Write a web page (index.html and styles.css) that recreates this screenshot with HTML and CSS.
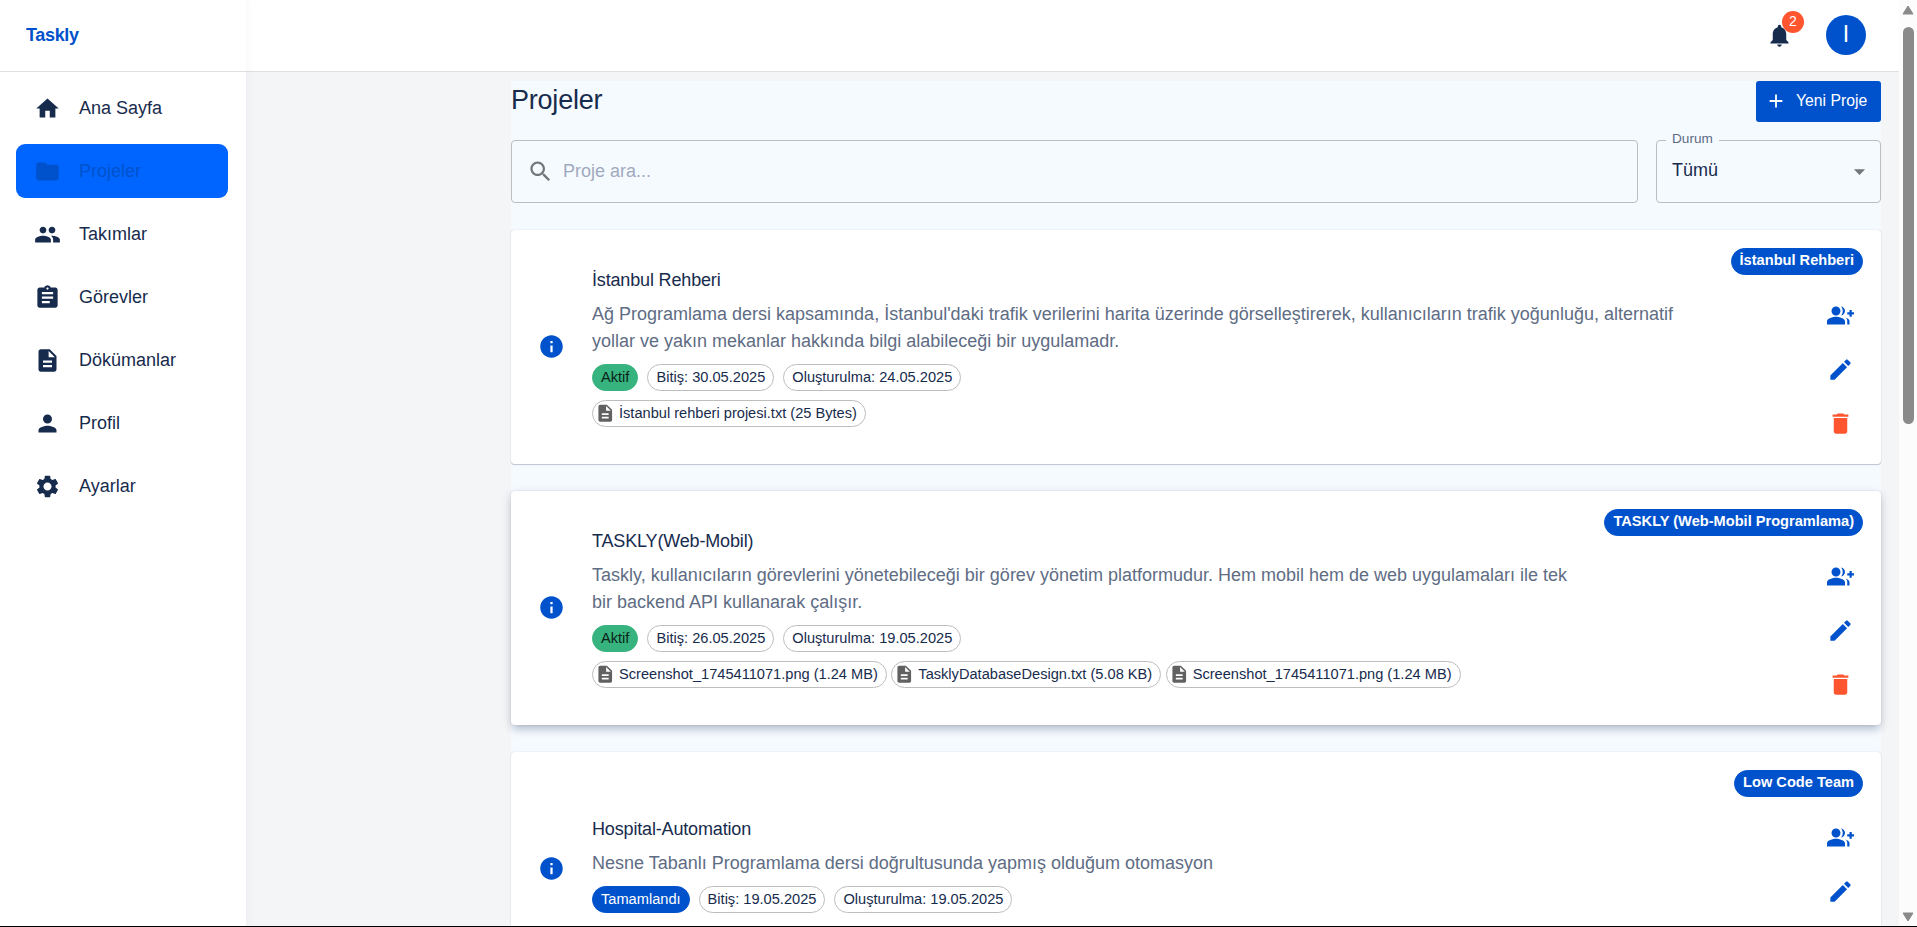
FILE: index.html
```
<!DOCTYPE html>
<html lang="tr">
<head>
<meta charset="utf-8">
<title>Taskly</title>
<link rel="stylesheet" href="styles.css">
</head>
<body>
<svg class="defs" aria-hidden="true">
  <symbol id="doc" viewBox="0 0 24 24"><path d="M14 2H6c-1.1 0-1.99.9-1.99 2L4 20c0 1.1.89 2 1.99 2H18c1.1 0 2-.9 2-2V8zm2 16H8v-2h8zm0-4H8v-2h8zm-3-5V3.5L18.5 9z"/></symbol>
  <symbol id="info" viewBox="0 0 24 24"><path d="M12 2C6.48 2 2 6.48 2 12s4.48 10 10 10 10-4.48 10-10S17.52 2 12 2m1 15h-2v-6h2zm0-8h-2V7h2z"/></symbol>
  <symbol id="group-add" viewBox="0 0 24 24"><path d="M22 9V7h-2v2h-2v2h2v2h2v-2h2V9zM8 12c2.21 0 4-1.79 4-4s-1.79-4-4-4-4 1.79-4 4 1.79 4 4 4m0 1c-2.67 0-8 1.34-8 4v3h16v-3c0-2.66-5.33-4-8-4m4.51-8.95C13.43 5.11 14 6.49 14 8s-.57 2.89-1.49 3.95C14.47 11.7 16 10.04 16 8s-1.53-3.7-3.49-3.95m4.02 9.78C17.42 14.66 18 15.7 18 17v3h2v-3c0-1.45-1.59-2.51-3.47-3.17"/></symbol>
  <symbol id="edit" viewBox="0 0 24 24"><path d="M3 17.25V21h3.75L17.81 9.94l-3.75-3.75zM20.71 7.04c.39-.39.39-1.02 0-1.41l-2.34-2.34a.996.996 0 0 0-1.41 0l-1.83 1.83 3.75 3.75z"/></symbol>
  <symbol id="trash" viewBox="0 0 24 24"><path d="M6 19c0 1.1.9 2 2 2h8c1.1 0 2-.9 2-2V7H6zM19 4h-3.5l-1-1h-5l-1 1H5v2h14z"/></symbol>
</svg>
<div class="app">
  <aside class="sidebar">
    <div class="brand">Taskly</div>
    <nav class="nav">
      <a class="nav-item"><svg class="icon" viewBox="0 0 24 24"><path d="M10 20v-6h4v6h5v-8h3L12 3 2 12h3v8z"/></svg><span>Ana Sayfa</span></a>
      <a class="nav-item active"><svg class="icon" viewBox="0 0 24 24"><path d="M10 4H4c-1.1 0-1.99.9-1.99 2L2 18c0 1.1.9 2 2 2h16c1.1 0 2-.9 2-2V8c0-1.100-.9-2-2-2h-8z"/></svg><span>Projeler</span></a>
      <a class="nav-item"><svg class="icon" viewBox="0 0 24 24"><path d="M16 11c1.660 0 2.990-1.340 2.990-3S17.660 5 16 5s-3 1.340-3 3 1.340 3 3 3m-8 0c1.660 0 2.990-1.340 2.990-3S9.660 5 8 5 5 6.340 5 8s1.340 3 3 3m0 2c-2.330 0-7 1.170-7 3.500V19h14v-2.500c0-2.330-4.670-3.500-7-3.500m8 0c-.29 0-.62.020-.97.050 1.160.84 1.970 1.970 1.970 3.450V19h6v-2.500c0-2.330-4.670-3.500-7-3.500"/></svg><span>Takımlar</span></a>
      <a class="nav-item"><svg class="icon" viewBox="0 0 24 24"><path d="M19 3h-4.180C14.400 1.840 13.300 1 12 1s-2.400.84-2.820 2H5c-1.100 0-2 .9-2 2v14c0 1.100.9 2 2 2h14c1.100 0 2-.9 2-2V5c0-1.100-.9-2-2-2m-7 0c.55 0 1 .45 1 1s-.45 1-1 1-1-.45-1-1 .45-1 1-1m2 14H7v-2h7zm3-4H7v-2h10zm0-4H7V7h10z"/></svg><span>Görevler</span></a>
      <a class="nav-item"><svg class="icon"><use href="#doc"/></svg><span>Dökümanlar</span></a>
      <a class="nav-item"><svg class="icon" viewBox="0 0 24 24"><path d="M12 12c2.210 0 4-1.790 4-4s-1.790-4-4-4-4 1.790-4 4 1.790 4 4 4m0 2c-2.670 0-8 1.340-8 4v2h16v-2c0-2.660-5.330-4-8-4"/></svg><span>Profil</span></a>
      <a class="nav-item"><svg class="icon" viewBox="0 0 24 24"><path d="M19.140 12.940c.04-.3.06-.61.06-.94 0-.32-.02-.64-.07-.94l2.030-1.580c.18-.14.23-.41.12-.61l-1.920-3.320c-.12-.22-.37-.29-.59-.22l-2.390.96c-.5-.38-1.030-.7-1.620-.94l-.36-2.540c-.04-.24-.24-.41-.48-.41h-3.840c-.24 0-.43.17-.47.41l-.36 2.540c-.59.24-1.130.57-1.620.94l-2.390-.96c-.22-.08-.47 0-.59.22L2.740 8.870c-.12.21-.08.47.12.61l2.030 1.580c-.05.3-.09.63-.09.94s.02.64.07.94l-2.030 1.580c-.18.14-.23.41-.12.61l1.920 3.320c.12.22.37.29.59.22l2.390-.96c.5.38 1.030.7 1.620.94l.36 2.540c.05.24.24.41.48.41h3.840c.24 0 .44-.17.47-.41l.36-2.540c.59-.24 1.130-.56 1.620-.94l2.390.96c.22.08.47 0 .59-.22l1.920-3.320c.12-.22.07-.47-.12-.61zM12 15.600c-1.980 0-3.600-1.620-3.600-3.600s1.620-3.600 3.600-3.600 3.600 1.620 3.600 3.600-1.620 3.600-3.600 3.600"/></svg><span>Ayarlar</span></a>
    </nav>
  </aside>
  <div class="page">
    <header class="topbar">
      <div class="bell"><svg class="icon" viewBox="0 0 24 24"><path d="M12 22c1.100 0 2-.9 2-2h-4c0 1.100.89 2 2 2m6-6v-5c0-3.070-1.640-5.640-4.500-6.320V4c0-.83-.67-1.500-1.500-1.500s-1.500.67-1.500 1.500v.68C7.630 5.360 6 7.920 6 11v5l-2 2v1h16v-1z"/></svg><span class="badge">2</span></div>
      <div class="avatar">I</div>
    </header>
    <main class="content">
      <div class="head">
        <h1 class="title">Projeler</h1>
        <button class="new"><svg class="plus" viewBox="0 0 24 24"><path d="M19 13h-6v6h-2v-6H5v-2h6V5h2v6h6z"/></svg><span>Yeni Proje</span></button>
      </div>
      <div class="filters">
        <div class="search"><svg class="icon" viewBox="0 0 24 24"><path d="M15.500 14h-.79l-.28-.27C15.410 12.590 16 11.110 16 9.500 16 5.910 13.090 3 9.500 3S3 5.910 3 9.500 5.910 16 9.500 16c1.610 0 3.090-.59 4.230-1.570l.27.28v.79l5 4.990L20.490 19zm-6 0C7.010 14 5 11.990 5 9.500S7.010 5 9.500 5 14 7.010 14 9.500 11.990 14 9.500 14"/></svg><span>Proje ara...</span></div>
        <div class="select"><span class="label">Durum</span><span class="value">Tümü</span><svg class="icon" viewBox="0 0 24 24"><path d="m7 10 5 5 5-5z"/></svg></div>
      </div>
      <section class="cards">
        <article class="card">
          <svg class="icon info"><use href="#info"/></svg>
          <div class="body">
            <h2 class="name">İstanbul Rehberi</h2>
            <p class="desc">Ağ Programlama dersi kapsamında, İstanbul'daki trafik verilerini harita üzerinde görselleştirerek, kullanıcıların trafik yoğunluğu, alternatif yollar ve yakın mekanlar hakkında bilgi alabileceği bir uygulamadr.</p>
            <div class="chips"><span class="chip green">Aktif</span><span class="chip">Bitiş: 30.05.2025</span><span class="chip">Oluşturulma: 24.05.2025</span></div>
            <div class="files"><span class="chip file"><svg><use href="#doc"/></svg>İstanbul rehberi projesi.txt (25 Bytes)</span></div>
          </div>
          <div class="side">
            <span class="chip team">İstanbul Rehberi</span>
            <div class="actions"><span class="act"><svg class="icon"><use href="#group-add"/></svg></span><span class="act"><svg class="icon"><use href="#edit"/></svg></span><span class="act red"><svg class="icon"><use href="#trash"/></svg></span></div>
          </div>
        </article>
        <article class="card raised">
          <svg class="icon info"><use href="#info"/></svg>
          <div class="body">
            <h2 class="name">TASKLY(Web-Mobil)</h2>
            <p class="desc">Taskly, kullanıcıların görevlerini yönetebileceği bir görev yönetim platformudur. Hem mobil hem de web uygulamaları ile tek bir backend API kullanarak çalışır.</p>
            <div class="chips"><span class="chip green">Aktif</span><span class="chip">Bitiş: 26.05.2025</span><span class="chip">Oluşturulma: 19.05.2025</span></div>
            <div class="files"><span class="chip file"><svg><use href="#doc"/></svg>Screenshot_1745411071.png (1.24 MB)</span><span class="chip file"><svg><use href="#doc"/></svg>TasklyDatabaseDesign.txt (5.08 KB)</span><span class="chip file"><svg><use href="#doc"/></svg>Screenshot_1745411071.png (1.24 MB)</span></div>
          </div>
          <div class="side">
            <span class="chip team">TASKLY (Web-Mobil Programlama)</span>
            <div class="actions"><span class="act"><svg class="icon"><use href="#group-add"/></svg></span><span class="act"><svg class="icon"><use href="#edit"/></svg></span><span class="act red"><svg class="icon"><use href="#trash"/></svg></span></div>
          </div>
        </article>
        <article class="card">
          <svg class="icon info"><use href="#info"/></svg>
          <div class="body">
            <h2 class="name">Hospital-Automation</h2>
            <p class="desc">Nesne Tabanlı Programlama dersi doğrultusunda yapmış olduğum otomasyon</p>
            <div class="chips"><span class="chip blue">Tamamlandı</span><span class="chip">Bitiş: 19.05.2025</span><span class="chip">Oluşturulma: 19.05.2025</span></div>
            <div class="files"></div>
          </div>
          <div class="side">
            <span class="chip team">Low Code Team</span>
            <div class="actions"><span class="act"><svg class="icon"><use href="#group-add"/></svg></span><span class="act"><svg class="icon"><use href="#edit"/></svg></span><span class="act red"><svg class="icon"><use href="#trash"/></svg></span></div>
          </div>
        </article>
      </section>
    </main>
  </div>
  <div class="scrollbar">
    <svg class="arrow" viewBox="0 0 12 10"><path d="M6 1 11 9H1z"/></svg>
    <div class="thumb"></div>
    <svg class="arrow last" viewBox="0 0 12 10"><path d="M1 1h10L6 9z"/></svg>
  </div>
</div>
</body>
</html>
```

FILE: styles.css
```
* { box-sizing: border-box; }
body {
  margin: 0;
  height: 927px;
  overflow: hidden;
  background: #f4f5f7;
  color: #172b4d;
  font-family: "Liberation Sans", Arial, sans-serif;
  font-size: 18px;
  line-height: 27px;
  border-bottom: 1px solid #000;
}
.defs { display: none; }
.icon { width: 27px; height: 27px; fill: currentColor; flex: none; display: block; }
.app { display: flex; height: 926px; overflow: hidden; }

.sidebar {
  width: 246px;
  flex: none;
  background: #fff;
  box-shadow: 0 0 9px rgba(9, 30, 66, 0.05);
  z-index: 1;
}
.brand {
  height: 72px;
  padding: 22px 26px 0;
  border-bottom: 1px solid #e0e0e0;
  color: #0052cc;
  font-weight: 700;
  letter-spacing: -0.35px;
}
.nav { display: flex; flex-direction: column; gap: 9px; padding: 9px 18px 0 16px; }
.nav-item {
  display: flex;
  align-items: center;
  height: 54px;
  padding-left: 18px;
  gap: 18px;
  border-radius: 9px;
}
.nav-item.active { background: #0065ff; color: #0052cc; }

.page { flex: 1; min-width: 0; }
.topbar {
  height: 72px;
  display: flex;
  justify-content: flex-end;
  align-items: center;
  gap: 33px;
  padding: 0 33px 1px 0;
  background: #fff;
  border-bottom: 1px solid #e0e0e0;
}
.bell { position: relative; }
.badge {
  position: absolute;
  left: 16px;
  top: -11px;
  width: 22px;
  height: 22px;
  border-radius: 50%;
  background: #ff5630;
  color: #fff;
  font-size: 14px;
  line-height: 21px;
  text-align: center;
}
.avatar {
  width: 40px;
  height: 40px;
  border-radius: 50%;
  background: #0052cc;
  color: #fff;
  font-size: 23px;
  line-height: 38px;
  text-align: center;
}

.content { margin: 9px 18px 0 265px; height: 1200px; background: #f5faff; }
.head { display: flex; justify-content: space-between; align-items: flex-start; height: 59px; }
.title { margin: 0; font-size: 27px; line-height: 38px; font-weight: 400; letter-spacing: -0.22px; }
.new {
  display: flex;
  align-items: center;
  width: 125px;
  height: 41px;
  padding: 0 0 2px 9px;
  gap: 9px;
  border: 0;
  border-radius: 3px;
  background: #0052cc;
  color: #fff;
  font: 400 15.75px/27px "Liberation Sans", Arial, sans-serif;
}
.plus { width: 22px; height: 22px; fill: #fff; }
.filters { display: flex; gap: 18px; }
.search, .select {
  height: 63px;
  border: 1px solid #b9bec3;
  border-radius: 4px;
  display: flex;
  align-items: center;
}
.search { flex: 1; padding-left: 15px; gap: 9px; color: #a0aabd; }
.search .icon { color: #747779; }
.select { position: relative; width: 225px; justify-content: space-between; padding: 0 7px 2px 15px; }
.select .icon { color: #747779; margin-top: 2px; }
.label {
  position: absolute;
  left: 9px;
  top: -16px;
  padding: 0 6px;
  background: #f5faff;
  color: #5e6c84;
  font-size: 13.6px;
}

.cards { display: flex; flex-direction: column; gap: 27px; margin-top: 27px; }
.card {
  display: flex;
  height: 234px;
  padding: 18px;
  border-radius: 3.5px;
  background: #fff;
  box-shadow: 0 1px 1px rgba(9, 30, 66, 0.22), 0 0 1px rgba(9, 30, 66, 0.28);
}
.card.raised { box-shadow: 0 4.5px 9px -2.2px rgba(9, 30, 66, 0.25), 0 0 1px rgba(9, 30, 66, 0.28), 0 3px 12px rgba(9, 30, 66, 0.1); }
.info { align-self: center; margin: -1px 27px 0 9px; color: #0052cc; }
.body { flex: 1; min-width: 0; align-self: center; margin-right: 18px; }
.name { margin: 0 0 7px; font-size: 18px; font-weight: 400; line-height: 27px; letter-spacing: -0.16px; }
.desc { margin: 0; color: #5e6c84; }
.chips { display: flex; gap: 9px; margin-top: 9px; }
.files { display: flex; gap: 4.5px; margin-top: 9px; }
.chip {
  display: inline-flex;
  align-items: center;
  height: 27px;
  padding: 0 8px 1px;
  border: 1px solid #bdbdbd;
  border-radius: 14px;
  font-size: 14.625px;
  white-space: nowrap;
}
.chip.green { background: #36b37e; border-color: #36b37e; color: #0b2419; }
.chip.blue { background: #0052cc; border-color: #0052cc; color: #fff; }
.chip.file { padding-left: 2px; }
.chip.file svg { width: 20.5px; height: 20.5px; margin: 1px 3.5px 0 0; fill: #616161; }
.side { display: flex; flex-direction: column; align-items: flex-end; gap: 18px; }
.chip.team { background: #0052cc; border-color: #0052cc; color: #fff; font-weight: 700; padding-bottom: 3px; }
.actions { display: flex; flex-direction: column; gap: 9px; color: #0052cc; }
.act { display: flex; width: 45px; height: 45px; align-items: center; justify-content: center; }
.act.red { color: #ff5630; }

.scrollbar {
  width: 18px;
  flex: none;
  display: flex;
  flex-direction: column;
  align-items: center;
  padding: 5px 0 4px;
  background: #fcfcfc;
}
.arrow { width: 12px; height: 10px; fill: #8a8a8a; stroke: #8a8a8a; stroke-linejoin: round; }
.arrow.last { margin-top: auto; }
.thumb { width: 11px; height: 397px; margin-top: 12px; border-radius: 6px; background: #8a8a8a; }
```
